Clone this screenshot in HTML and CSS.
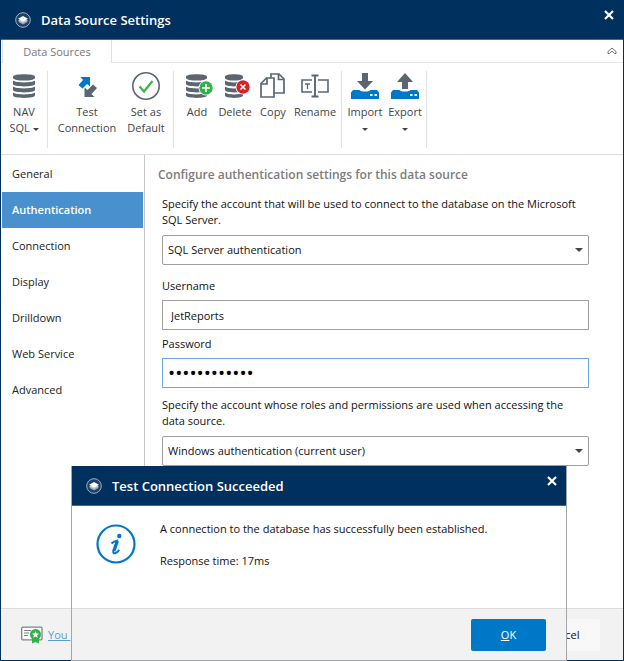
FILE: index.html
```html
<!DOCTYPE html>
<html lang="en">
<head>
    <meta charset="UTF-8">
    <meta name="viewport" content="width=device-width, initial-scale=1.0">
    <title>Data Source Settings</title>

    <link rel="stylesheet" href="styles.css">
</head>
<body>

    <!-- shapes used more than once -->
    <svg class="defs" aria-hidden="true">
        <symbol id="logo" viewBox="0 0 16 16">
            <circle cx="8" cy="8" r="7.3" fill="#1b3f68" stroke="#9fb0c2" stroke-width="1"/>
            <path d="M3 9.800 8 12.600l5-2.800-5-2.400z" fill="#8fa3b8"/>
            <path d="M3 8.400 8 11l5-2.600-5-2.400z" fill="#c3ced9"/>
            <path d="M3 6.800 8 9.600l5-2.800L8 4z" fill="#fff"/>
        </symbol>
        <symbol id="database" viewBox="0 0 22 24" preserveAspectRatio="none">
            <g fill="#5b6670">
                <path d="M0 2.500C0-.6 22-.6 22 2.500V4c0 3.400-22 3.400-22 0z"/>
                <path d="M0 6.500c3 2.500 19 2.500 22 0V10c0 3.200-22 3.200-22 0z"/>
                <path d="M0 12.500c3 2.500 19 2.500 22 0V16c0 3.200-22 3.200-22 0z"/>
                <path d="M0 18.500c3 2.500 19 2.500 22 0V21.500c0 3.200-22 3.200-22 0z"/>
            </g>
        </symbol>
        <symbol id="close" viewBox="0 0 10 10">
            <path d="M1 1l8 8M9 1L1 9" stroke="#fff" stroke-width="2.200"/>
        </symbol>
    </svg>

    <div class="window">
        <header class="titlebar">
            <svg class="logo"><use href="#logo"/></svg>
            <h1>Data Source Settings</h1>
            <button type="button" class="close" aria-label="Close"><svg><use href="#close"/></svg></button>
        </header>

        <div class="tabs">
            <button type="button" class="tab">Data Sources</button>
            <button type="button" class="collapse" aria-label="Collapse ribbon">
                <svg width="10" height="8" viewBox="0 0 10 8" fill="none" stroke="#6d6d6d">
                    <path d="M1 4.500 5 1l4 3.500v2H7.500L5 4.200 2.500 6.500H1z"/>
                </svg>
            </button>
        </div>

        <div class="ribbon">
            <div class="group source">
                <button type="button" class="tool">
                    <svg class="icon" viewBox="0 0 32 30"><use href="#database" x="5" y="3" width="22" height="24"/></svg>
                    <span>NAV<br>SQL <i class="caret"></i></span>
                </button>
            </div>
            <div class="group check">
                <button type="button" class="tool wide">
                    <svg class="icon" viewBox="0 0 32 30">
                        <path d="M9.500 6H19v9.500l-3-2.500-4.500 4.500L7.500 14l4.500-5z" fill="#0078c8"/>
                        <path d="M23.500 26H13.500V16.500l3 2.500 5.500-5.500 4 3.500-5.500 6z" fill="#5b6670"/>
                    </svg>
                    <span>Test<br>Connection</span>
                </button>
                <button type="button" class="tool">
                    <svg class="icon" viewBox="0 0 32 30" fill="none">
                        <circle cx="16" cy="15" r="13.200" stroke="#5b6670" stroke-width="1.600"/>
                        <path d="M9.500 15.500 14 20.500 22.500 10" stroke="#3cb44a" stroke-width="2.200"/>
                    </svg>
                    <span>Set as<br>Default</span>
                </button>
            </div>
            <div class="group edit">
                <button type="button" class="tool small">
                    <svg class="icon" viewBox="0 0 32 30">
                        <use href="#database" x="5" y="3" width="21" height="24"/>
                        <circle cx="25" cy="17" r="7.500" fill="#fff"/>
                        <circle cx="25" cy="17" r="6.700" fill="#34b04a"/>
                        <path d="M25 13v8M21 17h8" stroke="#fff" stroke-width="1.600"/>
                    </svg>
                    <span>Add</span>
                </button>
                <button type="button" class="tool">
                    <svg class="icon" viewBox="0 0 32 30">
                        <use href="#database" x="6" y="3" width="18" height="24"/>
                        <circle cx="24" cy="16" r="7.500" fill="#fff"/>
                        <circle cx="24" cy="16" r="6.700" fill="#dd1f26"/>
                        <path d="M21.500 13.500l5 5M26.500 13.500l-5 5" stroke="#fff" stroke-width="1.600"/>
                    </svg>
                    <span>Delete</span>
                </button>
                <button type="button" class="tool small">
                    <svg class="icon" viewBox="0 0 32 30" fill="#fff" stroke="#5b6670" stroke-width="1.700">
                        <path d="M14 3h8l5 5v14H14z"/>
                        <path d="M21.500 3v5.500H27" fill="none"/>
                        <path d="M9.500 7H17v19H4V12.500z"/>
                        <path d="M10 7v6H4" fill="none"/>
                    </svg>
                    <span>Copy</span>
                </button>
                <button type="button" class="tool large">
                    <svg class="icon" viewBox="0 0 32 30" fill="none" stroke="#5b6670">
                        <path d="M13 9H3v12h10M19 9h10v12H19" stroke-width="1.600"/>
                        <path d="M12.500 4.500h7M12.500 25.500h7M16 4.500v21" stroke-width="1.900"/>
                        <path d="M6 13h5M8.500 13v5" stroke-width="1.300"/>
                    </svg>
                    <span>Rename</span>
                </button>
            </div>
            <div class="group transfer">
                <button type="button" class="tool">
                    <svg class="icon" viewBox="0 0 32 30">
                        <path d="M13 2h6v8h5l-8 8.500L8 10h5z" fill="#5b6670"/>
                        <path d="M4 19h6.500c1.500 2 9.500 2 11 0H28l2 2.500V28H2v-6.500z" fill="#0078c8"/>
                        <path d="M21 24h2.500M25.500 24H28" stroke="#fff" stroke-width="2"/>
                    </svg>
                    <span>Import<br><i class="caret"></i></span>
                </button>
                <button type="button" class="tool">
                    <svg class="icon" viewBox="0 0 32 30">
                        <path d="M13 18h6v-7h5l-8-9-8 9h5z" fill="#5b6670"/>
                        <path d="M4 19h6.500c1.500 2 9.500 2 11 0H28l2 2.500V28H2v-6.500z" fill="#0078c8"/>
                        <path d="M21 24h2.500M25.500 24H28" stroke="#fff" stroke-width="2"/>
                    </svg>
                    <span>Export<br><i class="caret"></i></span>
                </button>
            </div>
        </div>

        <div class="content">
            <nav class="sidebar">
                <a href="#">General</a>
                <a href="#" class="active">Authentication</a>
                <a href="#">Connection</a>
                <a href="#">Display</a>
                <a href="#">Drilldown</a>
                <a href="#">Web Service</a>
                <a href="#">Advanced</a>
            </nav>

            <main>
                <h2>Configure authentication settings for this data source</h2>
                <form>
                    <label class="text" for="account">Specify the account that will be used to connect to the database on the Microsoft SQL Server.</label>
                    <div class="select">
                        <select id="account">
                            <option>SQL Server authentication</option>
                        </select>
                    </div>

                    <label class="name" for="username">Username</label>
                    <input type="text" id="username" value="JetReports">

                    <label for="password">Password</label>
                    <input type="password" id="password" value="jetreports12">

                    <label class="text" for="roles">Specify the account whose roles and permissions are used when accessing the data source.</label>
                    <div class="select">
                        <select id="roles">
                            <option>Windows authentication (current user)</option>
                        </select>
                    </div>
                </form>
            </main>
        </div>

        <footer class="footer">
            <svg class="licence" width="22" height="18" viewBox="0 0 22 18">
                <rect x=".7" y="1.200" width="20.300" height="12.600" rx="1" fill="#fff" stroke="#7b848c" stroke-width="1.300"/>
                <path d="M3 4.500h7M3 7h5M3 9.500h4" stroke="#7b848c"/>
                <path d="M11 11v6.500l3.500-1.500 3.500 1.500V11z" fill="#34b04a"/>
                <circle cx="14.500" cy="8.500" r="5.500" fill="#34b04a"/>
                <path d="M14.500 5l1 2.400 2.500.2-1.900 1.600.6 2.500-2.200-1.300-2.200 1.300.6-2.500L11 7.600l2.500-.2z" fill="#fff"/>
            </svg>
            <a href="#">You </a>
            <button type="button" class="btn">Cancel</button>
        </footer>
    </div>

    <div class="dialog" role="dialog" aria-labelledby="dialog-title">
        <header class="titlebar">
            <svg class="logo"><use href="#logo"/></svg>
            <h1 id="dialog-title">Test Connection Succeeded</h1>
            <button type="button" class="close" aria-label="Close"><svg><use href="#close"/></svg></button>
        </header>
        <div class="message">
            <svg width="40" height="40" viewBox="0 0 40 40">
                <circle cx="20" cy="20" r="18.500" fill="none" stroke="#0078c8" stroke-width="2.200"/>
                <circle cx="23.300" cy="12" r="2.200" fill="#0078c8"/>
                <path d="M15.500 19.500c2-1.800 4-2.600 5.500-2.800l-3.500 9.300c-1 3 .2 4 2.500 2.800 1.300-.7 2.300-1.800 3.200-3" fill="none" stroke="#0078c8" stroke-width="2"/>
                <path d="M21.500 17l-3.500 10" stroke="#0078c8" stroke-width="3"/>
            </svg>
            <div>
                <p>A connection to the database has successfully been established.</p>
                <p>Response time: 17ms</p>
            </div>
        </div>
        <footer class="footer">
            <button type="button" class="btn primary"><u>O</u>K</button>
        </footer>
    </div>

</body>
</html>
```

FILE: styles.css
```css
* {
    box-sizing: border-box;
}
body {
    margin: 0;
    position: relative;
    min-height: 100vh;
    display: flex;
    font: 11px/16px "Open Sans", "Noto Sans", sans-serif;
    color: #111;
}
h1, h2, p {
    margin: 0;
}
button, input, select {
    font: inherit;
    color: inherit;
}
button {
    padding: 0;
    border: none;
    background: none;
}
.defs {
    position: absolute;
    width: 0;
    height: 0;
}
.window {
    flex: 1;
    display: flex;
    flex-direction: column;
    background: #fff;
    border: 1px solid #00305e;
    border-top: none;
}

/* title bars */
.titlebar {
    display: flex;
    align-items: center;
    height: 40px;
    padding-left: 14px;
    background: #00305e;
    border-bottom: 1px solid #44688c;
    color: #fff;
}
.titlebar h1 {
    flex: 1;
    margin-left: 10px;
    font-size: 13px;
    font-weight: 600;
}
.logo {
    width: 16px;
    height: 16px;
}
.close {
    align-self: flex-start;
    width: 28px;
    height: 29px;
}
.close svg {
    display: block;
    width: 10px;
    height: 10px;
    margin: auto;
}

/* ribbon */
.tabs {
    display: flex;
    justify-content: space-between;
    height: 23px;
    border-bottom: 1px solid #e6e6e6;
}
.tab {
    width: 110px;
    height: 23px;
    margin-left: 1px;
    background: #fff;
    border: 1px solid #e0e0e0;
    border-width: 0 1px;
    color: #777;
}
.collapse {
    width: 22px;
}
.ribbon {
    display: flex;
    height: 92px;
    padding: 8px 0 6px;
    border-bottom: 1px solid #dcdcdc;
    color: #444;
}
.group {
    display: flex;
    border-right: 1px solid #e2e2e2;
}
.source {
    padding: 0 3px;
}
.check {
    padding-right: 7px;
}
.edit {
    padding: 0 2px 0 5px;
}
.transfer {
    padding: 0 1px 0 3px;
}
.tool {
    display: flex;
    flex-direction: column;
    align-items: center;
    width: 40px;
    white-space: nowrap;
}
.tool.small {
    width: 36px;
}
.tool.large {
    width: 48px;
}
.tool.wide {
    width: 78px;
}
.icon {
    width: 32px;
    height: 30px;
    margin-bottom: 3px;
}
.caret {
    display: inline-block;
    vertical-align: middle;
    border: 3px solid transparent;
    border-top-color: #444;
    border-bottom: none;
}

/* page */
.content {
    flex: 1;
    display: flex;
}
.sidebar {
    width: 144px;
    padding-top: 1px;
    border-right: 1px solid #c8c8c8;
}
.sidebar a {
    display: block;
    padding: 10px 11px;
    color: #222;
    text-decoration: none;
}
.sidebar .active {
    margin: 0 1px;
    padding: 10px;
    background: #4990ce;
    color: #fff;
    font-weight: 600;
}
main {
    flex: 1;
    padding: 12px 34px 0 13px;
}
h2 {
    font-size: 12px;
    font-weight: 600;
    color: #7c7c7c;
}
form {
    margin: 13px 0 0 4px;
}
label {
    display: block;
    margin: 6px 0;
}
.text {
    margin: 9px 0 7px;
    padding-right: 8px;
}
.name {
    margin-top: 13px;
}
form input, select {
    display: block;
    width: 100%;
    height: 30px;
    padding: 0 8px;
    background: #fff;
    border: 1px solid #a0a0a0;
    border-radius: 0;
    outline: none;
}
.select {
    position: relative;
}
.select select {
    appearance: none;
    padding: 0 5px;
    border-radius: 2px;
}
.select::after {
    content: "";
    position: absolute;
    right: 6px;
    top: 13px;
    border: 4px solid transparent;
    border-top-color: #444;
    border-bottom: none;
}
form input[type="password"] {
    padding: 0 5px;
    border-color: #6aaae4;
    font-size: 19px;
    color: #000;
}

/* bottom bar */
.footer {
    display: flex;
    align-items: center;
    height: 52px;
    padding: 0 23px 0 20px;
    background: #f2f2f2;
    border-top: 1px solid #dcdcdc;
}
.footer a {
    margin-left: 5px;
    color: #5b9bd5;
    white-space: pre;
}
.btn {
    width: 75px;
    height: 32px;
    margin-left: auto;
    background: #f8f8f8;
    border-radius: 2px;
}
.btn.primary {
    background: #0078c8;
    color: #fff;
}

/* message box over the window */
.dialog {
    position: absolute;
    left: 71px;
    right: 57px;
    bottom: 0;
    background: #fff;
    border: 1px solid #a3a7ab;
    border-top: none;
}
.dialog .footer {
    padding-right: 20px;
}
.message {
    display: flex;
    gap: 24px;
    height: 102px;
    padding: 15px 24px;
}
.message svg {
    margin-top: 3px;
}
.message p {
    margin-bottom: 16px;
}
```
